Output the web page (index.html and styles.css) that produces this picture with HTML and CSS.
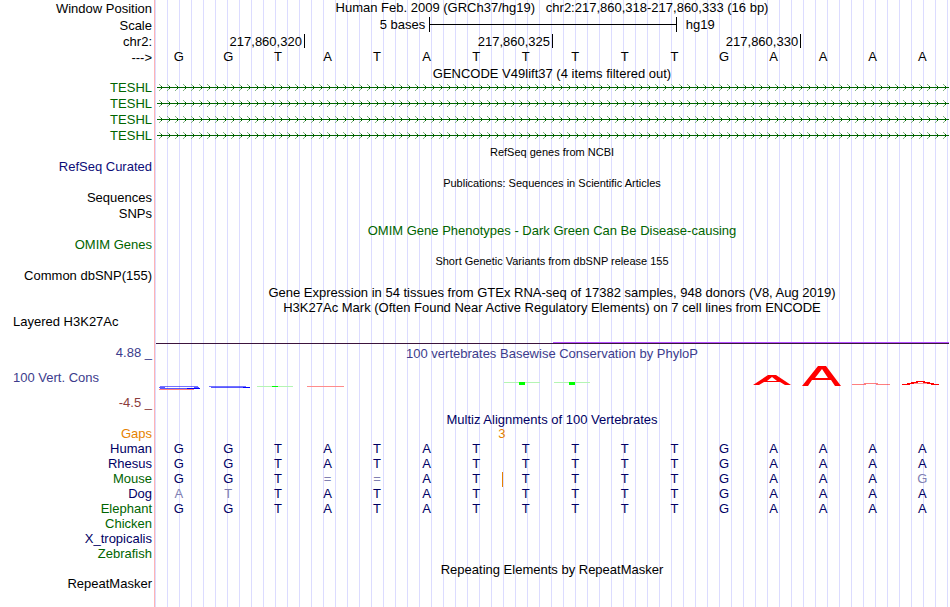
FILE: index.html
```html
<!DOCTYPE html>
<html lang="en">
<head>
<meta charset="utf-8">
<title>Genome Browser hg19</title>
<link rel="stylesheet" href="styles.css">
</head>
<body>
<main class="browser">
  <div class="row row-17"><div class="label">Window Position</div><h1 class="title">Human Feb. 2009 (GRCh37/hg19) &nbsp; chr2:217,860,318-217,860,333 (16 bp)</h1></div>
  <div class="row row-17"><div class="label">Scale</div><div class="scale"><span>5 bases</span><span class="scale-bar"></span><span>hg19</span></div></div>
  <div class="row row-16"><div class="label">chr2:</div><div class="ticks"><span class="tick">217,860,320</span><span class="tick">217,860,325</span><span class="tick">217,860,330</span></div></div>
  <div class="row row-16"><div class="label">---&gt;</div><div class="bases ruler"><span>G</span><span>G</span><span>T</span><span>A</span><span>T</span><span>A</span><span>T</span><span>T</span><span>T</span><span>T</span><span>T</span><span>G</span><span>A</span><span>A</span><span>A</span><span>A</span></div></div>

  <div class="row row-14"><h2 class="title">GENCODE V49lift37 (4 items filtered out)</h2></div>
  <div class="row row-16"><div class="label green">TESHL</div><svg class="gene" aria-hidden="true"><defs><pattern id="arrow" x="2" y="0" width="8" height="7" patternUnits="userSpaceOnUse"><path d="M0 0h1v1h-1zM1 1h1v1h-1zM0 6h1v1h-1zM1 5h1v1h-1z" class="arrow-tail"/><path d="M2 2h1v1h-1zM3 3h1v1h-1zM2 4h1v1h-1z" class="arrow-head"/></pattern></defs><rect width="100%" height="7" fill="url(#arrow)"/><rect y="3" width="100%" height="1" class="intron"/></svg></div>
  <div class="row row-16"><div class="label green">TESHL</div><svg class="gene" aria-hidden="true"><rect width="100%" height="7" fill="url(#arrow)"/><rect y="3" width="100%" height="1" class="intron"/></svg></div>
  <div class="row row-16"><div class="label green">TESHL</div><svg class="gene" aria-hidden="true"><rect width="100%" height="7" fill="url(#arrow)"/><rect y="3" width="100%" height="1" class="intron"/></svg></div>
  <div class="row row-16"><div class="label green">TESHL</div><svg class="gene" aria-hidden="true"><rect width="100%" height="7" fill="url(#arrow)"/><rect y="3" width="100%" height="1" class="intron"/></svg></div>

  <div class="row row-16"><h2 class="title small">RefSeq genes from NCBI</h2></div>
  <div class="row row-15"><div class="label blue">RefSeq Curated</div></div>
  <div class="row row-16"><h2 class="title small">Publications: Sequences in Scientific Articles</h2></div>
  <div class="row row-15"><div class="label">Sequences</div></div>
  <div class="row row-16"><div class="label">SNPs</div></div>
  <div class="row row-16"><h2 class="title green">OMIM Gene Phenotypes - Dark Green Can Be Disease-causing</h2></div>
  <div class="row row-15"><div class="label green">OMIM Genes</div></div>
  <div class="row row-16"><h2 class="title small">Short Genetic Variants from dbSNP release 155</h2></div>
  <div class="row row-15"><div class="label">Common dbSNP(155)</div></div>
  <div class="row row-16"><h2 class="title">Gene Expression in 54 tissues from GTEx RNA-seq of 17382 samples, 948 donors (V8, Aug 2019)</h2></div>
  <div class="row row-15"><h2 class="title">H3K27Ac Mark (Often Found Near Active Regulatory Elements) on 7 cell lines from ENCODE</h2></div>
  <div class="row row-15"><div class="label left">Layered H3K27Ac</div></div>
  <div class="row row-15"><div class="signal"><span class="signal-high"></span></div></div>

  <div class="row row-16"><div class="label slate">4.88 _</div><h2 class="title slate">100 vertebrates Basewise Conservation by PhyloP</h2></div>
  <div class="row wiggle">
    <div class="wiggle-labels"><div class="label left slate">100 Vert. Cons</div><div class="label maroon">-4.5 _</div></div>
    <svg class="logo" viewBox="155 361 794 51" preserveAspectRatio="none" role="img" aria-label="PhyloP scores by base">
      <g fill="none" stroke="#0000ff">
        <path d="M160 386.5h38M209 386.5h37" stroke-opacity=".55"/>
        <path d="M159 387.5h6M194 387.5h5M160 388.5h27M211 387.5h33" stroke-opacity=".65"/>
        <path d="M187 388.5h13M243 387.5h7"/>
      </g>
      <path d="M159 389.5h35" stroke="#ff8080"/>
      <path d="M257 386.5h36M504 382.5h36M554 382.5h36" stroke="#b4f5b4"/>
      <path d="M272 386h6v1h-6zM519 382h6v3h-6zM569 382h6v3h-6z" fill="#00ff00"/>
      <path d="M307 386.5h37" stroke="#ff8c8c"/>
      <g fill="#ff0000" fill-rule="evenodd">
        <path d="M753 385 768 375H776L791 385H785L780 382H764L759 385ZM767 381H777L772 377Z"/>
        <path d="M802 386 818 366H826L841 386H835L831 380H812L808 386ZM815 378H828L822 369Z"/>
      </g>
      <g fill="none" stroke="#ff0000">
        <path d="M852 384.500h14M864 383.500h14M876 384.500h14" stroke-opacity=".5"/>
        <path d="M902 384.500h8M907 383.500h7M911 382.500h7M916 381.500h9M923 382.500h7M927 383.500h7M931 384.500h8"/>
        <path d="M914 383.500h13" stroke-opacity=".4"/>
      </g>
    </svg>
  </div>

  <div class="row row-15"><h2 class="title navy">Multiz Alignments of 100 Vertebrates</h2></div>
  <div class="row row-15"><div class="label orange">Gaps</div><div class="bases orange"><span class="gap">3</span></div></div>
  <div class="row row-15"><div class="label navy">Human</div><div class="bases"><span>G</span><span>G</span><span>T</span><span>A</span><span>T</span><span>A</span><span>T</span><span>T</span><span>T</span><span>T</span><span>T</span><span>G</span><span>A</span><span>A</span><span>A</span><span>A</span></div></div>
  <div class="row row-15"><div class="label navy">Rhesus</div><div class="bases"><span>G</span><span>G</span><span>T</span><span>A</span><span>T</span><span>A</span><span>T</span><span>T</span><span>T</span><span>T</span><span>T</span><span>G</span><span>A</span><span>A</span><span>A</span><span>A</span></div></div>
  <div class="row row-15"><div class="label green">Mouse</div><div class="bases"><span>G</span><span>G</span><span>T</span><span class="faint">=</span><span class="faint">=</span><span>A</span><span>T</span><span class="insert">T</span><span>T</span><span>T</span><span>T</span><span>G</span><span>A</span><span>A</span><span>A</span><span class="faint">G</span></div></div>
  <div class="row row-15"><div class="label navy">Dog</div><div class="bases"><span class="faint">A</span><span class="faint">T</span><span>T</span><span>A</span><span>T</span><span>A</span><span>T</span><span>T</span><span>T</span><span>T</span><span>T</span><span>G</span><span>A</span><span>A</span><span>A</span><span>A</span></div></div>
  <div class="row row-15"><div class="label green">Elephant</div><div class="bases"><span>G</span><span>G</span><span>T</span><span>A</span><span>T</span><span>A</span><span>T</span><span>T</span><span>T</span><span>T</span><span>T</span><span>G</span><span>A</span><span>A</span><span>A</span><span>A</span></div></div>
  <div class="row row-15"><div class="label green">Chicken</div></div>
  <div class="row row-15"><div class="label navy">X_tropicalis</div></div>
  <div class="row row-15"><div class="label green">Zebrafish</div></div>
  <div class="row row-15"><h2 class="title">Repeating Elements by RepeatMasker</h2></div>
  <div class="row row-15"><div class="label">RepeatMasker</div></div>
</main>
</body>
</html>
```
FILE: styles.css
```css
body {
  margin: 0;
  background: #fff;
  color: #000;
  font: 13px/15px "Liberation Sans", Arial, Helvetica, sans-serif;
}

/* Guide lines sit behind every track */
.browser {
  min-height: 100vh;
  box-sizing: border-box;
  margin-right: 1px;
  background:
    linear-gradient(#ffb4b4, #ffb4b4) 154px 0 / 1px 100% no-repeat,
    linear-gradient(90deg, #fff 155px, transparent 155px),
    repeating-linear-gradient(90deg, transparent 0 11px, #dcdcff 11px 12px);
}

.row {
  display: grid;
  grid-template-columns: 154px minmax(0, 1fr);
  column-gap: 1px;
}
.row-14 { height: 14px; line-height: 16px; }
.row-15 { height: 15px; line-height: 15px; }
.row-16 { height: 16px; line-height: 16px; }
.row-17 { height: 17px; line-height: 17px; }

.label {
  grid-column: 1;
  padding-right: 2px;
  text-align: right;
  white-space: nowrap;
}
.label.left {
  padding-left: 13px;
  text-align: left;
}

.title {
  grid-column: 2;
  margin: 0;
  font-size: 13px;
  font-weight: normal;
  text-align: center;
  white-space: nowrap;
}
.row-16 .title { line-height: 18px; }
.row-17 .title { line-height: 15px; }
.row-16 .title.small {
  font-size: 11px;
  line-height: 16px;
}
.row-15 .label,
.row-15 .bases { line-height: 13px; }

.green { color: #006400; }
.blue { color: #0c0c78; }
.navy { color: #000064; }
.slate { color: #3c3c8c; }
.maroon { color: #8c3c3c; }

.scale {
  display: grid;
  grid-template-columns: 1fr 31.25% 1fr;
  padding-left: 2px;
  line-height: 15px;
}
.scale span:first-child {
  padding-right: 4px;
  text-align: right;
}
.scale span:last-child { padding-left: 9px; }
.scale-bar {
  height: 15px;
  box-sizing: border-box;
  border: solid #000;
  border-width: 0 1px;
  background: linear-gradient(#000, #000) 0 7px / 100% 1px no-repeat;
}

.ticks {
  display: grid;
  grid-template-columns: 3fr 5fr 5fr 3fr;
}
.tick {
  height: 14px;
  margin-right: -1px;
  padding-right: 2px;
  border-right: 1px solid #000;
  text-align: right;
}

.bases {
  display: grid;
  grid-template-columns: repeat(16, 1fr);
  margin-left: -1px;
  padding-right: 2px;
  color: #000064;
  text-align: center;
}
.bases.ruler {
  color: #000;
  line-height: 14px;
}
.faint { color: #8080b2; }
.orange,
.bases.orange { color: #e68200; }
.gap {
  grid-column: 7 / 9;
  padding-left: 2px;
}
.insert {
  background: linear-gradient(#e68200, #e68200) 1px 0 / 1px 100% no-repeat;
}

.gene {
  width: calc(100% - 2px);
  height: 7px;
  margin: 4px 0 0 2px;
}
.arrow-tail { fill: #82b482; }
.arrow-head,
.intron { fill: #006400; }

.signal {
  grid-column: 2;
  height: 13px;
  margin-left: 1px;
  border-bottom: 1px solid #3c143c;
  display: flex;
  justify-content: flex-end;
  align-items: flex-end;
}
.signal-high {
  width: 50%;
  height: 1px;
  background: #b450ff;
}

.wiggle-labels {
  display: flex;
  flex-direction: column;
  justify-content: space-between;
  padding: 9px 0 2px;
}
.logo {
  display: block;
  width: 100%;
  height: 51px;
}
```
